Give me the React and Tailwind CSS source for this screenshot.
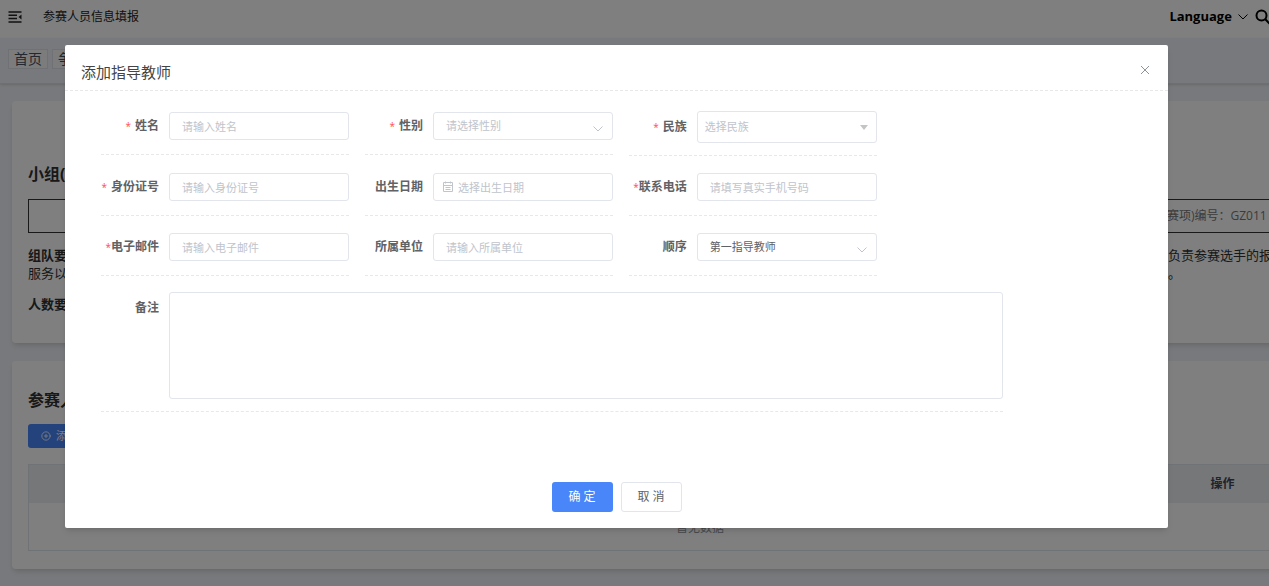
import { CirclePlus } from 'lucide-react'

const control =
  'w-full rounded-[3px] border border-[#e2e5ec] bg-white text-[11px] text-[#606266] outline-none placeholder:text-[#c0c4cc]'

function Chevron({ className }) {
  return (
    <svg viewBox="0 0 10 6" className={className} fill="none" stroke="currentColor">
      <path d="M0.5 0.5 5 5 9.5 0.5" />
    </svg>
  )
}

function Calendar() {
  return (
    <svg
      viewBox="0 0 12 12"
      className="pointer-events-none absolute top-2 left-[9px] h-3 w-3 text-[#c0c4cc]"
      fill="none"
      stroke="currentColor"
    >
      <path d="M1.5 1.5h9v9h-9zM1.5 4.5h9M3.5 0.5v2M8.5 0.5v2M3.5 6.5h5M3.5 8.5h5" />
    </svg>
  )
}

function Field({ id, label, required, tight, tall, children }) {
  return (
    <div
      className={`flex gap-[10px] border-b border-dashed border-[#e8e8e8] ${tall ? 'pb-3' : 'pb-[14px]'}`}
    >
      <label
        htmlFor={id}
        className={`w-[58px] shrink-0 text-right text-xs font-bold whitespace-nowrap text-[#606266] ${tall ? 'leading-8' : 'leading-7'}`}
      >
        {required && (
          <span className={`text-[10px] font-normal text-[#ff4d4f] ${tight ? '' : 'mr-1'}`}>*</span>
        )}
        {label}
      </label>
      <div className="relative min-w-0 flex-1">{children}</div>
    </div>
  )
}

function Page() {
  return (
    <div className="w-[110%]">
      <header className="flex h-[38px] items-center bg-white pr-[125px] pb-1 pl-2">
        <svg viewBox="0 0 14 12" className="h-3 w-[14px]" fill="none" stroke="#222" strokeWidth="1.5">
          <path d="M0.5 1h13M0.5 4.3h8.5M0.5 7.6h8.5M0.5 11h13" />
          <path d="M13.5 3.5v5l-3-2.5z" fill="#222" stroke="none" />
        </svg>
        <h1 className="ml-[21px] text-xs text-[#222]">参赛人员信息填报</h1>
        <button type="button" className="ml-auto flex items-center text-[13px] font-bold text-black">
          Language
          <Chevron className="ml-[6px] h-[6px] w-[10px]" />
        </button>
        <button type="button" aria-label="搜索" className="ml-[7px]">
          <svg viewBox="0 0 16 16" className="h-4 w-4" fill="none" stroke="#000" strokeWidth="2">
            <circle cx="6.5" cy="6.5" r="5" />
            <path d="m10.3 10.3 5 5" />
          </svg>
        </button>
      </header>

      <nav className="flex h-[46px] gap-1 border-b border-[#dcdfe6] pt-[11px] pl-2 text-sm text-[#495060] shadow-sm">
        <a href="#home" className="h-5 border border-[#dfe2e8] bg-[#f8f9fb] px-[5px] leading-[18px]">
          首页
        </a>
        <a href="#contest" className="h-5 border border-[#dfe2e8] bg-[#f8f9fb] px-[5px] leading-[18px]">
          争
        </a>
      </nav>

      <main className="space-y-[18px] px-3 pt-[17px] pb-[18px]">
        <section className="h-[242px] rounded bg-white px-4 pt-[61px] text-[13px] leading-[18px] text-[#303133] shadow-md">
          <h2 className="text-base leading-6 font-bold">小组(团体)信息</h2>
          <div className="mt-[13px] flex h-[34px] items-center border border-[#333] text-xs text-[#777]">
            <span className="flex-1" />
            <span className="w-[200px] shrink-0">赛项)编号：GZ011</span>
          </div>
          <div className="mt-[13px] flex">
            <b className="flex-1">组队要求：</b>
            <span className="w-[200px] shrink-0 whitespace-nowrap">负责参赛选手的报名</span>
          </div>
          <div className="flex">
            <span className="flex-1">服务以及日常管理</span>
            <span className="w-[200px] shrink-0">。</span>
          </div>
          <p className="mt-[13px] font-bold">人数要求：</p>
        </section>

        <section className="h-[208px] rounded bg-white px-4 pt-[27px] shadow-md">
          <h2 className="text-base leading-6 font-bold text-[#303133]">参赛人员</h2>
          <button
            type="button"
            className="mt-3 flex h-6 items-center gap-[5px] rounded-[3px] bg-[#4886f9] px-[13px] text-[11px] text-white"
          >
            <CirclePlus size={10} />
            添加参赛人员
          </button>
          <table className="mt-4 w-full table-fixed border border-[#dfe6ec] text-xs">
            <colgroup>
              <col />
              <col className="w-[110px]" />
              <col className="w-[90px]" />
            </colgroup>
            <thead>
              <tr className="h-[38px] bg-[#ebeef2] text-[#424656]">
                <th />
                <th>操作</th>
                <th />
              </tr>
            </thead>
            <tbody>
              <tr className="h-12">
                <td colSpan={3} className="pt-1 pl-1 text-center text-[#909399]">
                  暂无数据
                </td>
              </tr>
            </tbody>
          </table>
        </section>
      </main>
    </div>
  )
}

function TeacherDialog() {
  return (
    <div
      role="dialog"
      aria-label="添加指导教师"
      className="mt-[45px] mr-[101px] ml-[65px] rounded-[2px] bg-white pb-4 shadow-md"
    >
      <div className="flex h-[46px] items-center justify-between border-b border-dashed border-[#e8e8e8] pt-[9px] pr-[18px] pl-4">
        <h2 className="text-[15px] text-[#444]">添加指导教师</h2>
        <button type="button" aria-label="关闭" className="mb-1 text-[#909399]">
          <svg viewBox="0 0 10 10" className="h-[10px] w-[10px]" fill="none" stroke="currentColor">
            <path d="m1 1 8 8M9 1 1 9" />
          </svg>
        </button>
      </div>

      <form className="pt-5">
        <div className="mr-[165px] ml-9">
          <div className="grid w-[86%] grid-cols-3 items-center gap-x-4 gap-y-[17px]">
            <Field id="name" label="姓名" required>
              <input id="name" className={`${control} h-7 px-3`} placeholder="请输入姓名" />
            </Field>
            <Field id="gender" label="性别" required>
              <select
                id="gender"
                defaultValue=""
                className={`${control} h-7 appearance-none px-3 invalid:text-[#c0c4cc]`}
                required
              >
                <option value="">请选择性别</option>
                <option value="1">男</option>
                <option value="2">女</option>
              </select>
              <Chevron className="pointer-events-none absolute top-[14px] right-[10px] h-[6px] w-[10px] text-[#c0c4cc]" />
            </Field>
            <Field id="nation" label="民族" required tall>
              <select
                id="nation"
                defaultValue=""
                className={`${control} h-8 appearance-none px-[7px] invalid:text-[#c0c4cc]`}
                required
              >
                <option value="">选择民族</option>
                <option value="1">汉族</option>
              </select>
              <svg
                viewBox="0 0 8 5"
                className="pointer-events-none absolute top-[14px] right-[9px] h-[5px] w-2"
                fill="#c4c4c4"
              >
                <path d="M0 0h8L4 5z" />
              </svg>
            </Field>

            <Field id="idcard" label="身份证号" required>
              <input id="idcard" className={`${control} h-7 px-3`} placeholder="请输入身份证号" />
            </Field>
            <Field id="birthday" label="出生日期">
              <input id="birthday" className={`${control} h-7 pl-6`} placeholder="选择出生日期" />
              <Calendar />
            </Field>
            <Field id="phone" label="联系电话" required tight>
              <input id="phone" className={`${control} h-7 px-3`} placeholder="请填写真实手机号码" />
            </Field>

            <Field id="email" label="电子邮件" required tight>
              <input id="email" className={`${control} h-7 px-3`} placeholder="请输入电子邮件" />
            </Field>
            <Field id="company" label="所属单位">
              <input id="company" className={`${control} h-7 px-3`} placeholder="请输入所属单位" />
            </Field>
            <Field id="order" label="顺序">
              <select id="order" defaultValue="1" className={`${control} h-7 appearance-none px-3`}>
                <option value="1">第一指导教师</option>
                <option value="2">第二指导教师</option>
              </select>
              <Chevron className="pointer-events-none absolute top-[14px] right-[10px] h-[6px] w-[10px] text-[#c0c4cc]" />
            </Field>
          </div>

          <div className="mt-4">
            <Field id="remark" label="备注" tall>
              <textarea id="remark" className={`${control} block h-[107px] resize-none px-3 py-1`} />
            </Field>
          </div>
        </div>

        <div className="mt-[70px] flex justify-center gap-2 text-xs">
          <button type="button" className="h-[30px] w-[61px] rounded-[3px] bg-[#4886f9] text-white">
            确 定
          </button>
          <button
            type="button"
            className="h-[30px] w-[61px] rounded-[3px] border border-[#e2e5ec] bg-white text-[#606266]"
          >
            取 消
          </button>
        </div>
      </form>
    </div>
  )
}

export default function App() {
  return (
    <div className="relative min-h-screen overflow-hidden bg-[#f0f3f8] font-['Open_Sans','Noto_Sans_CJK_SC',sans-serif]">
      <Page />
      <div className="absolute inset-0 bg-black/50">
        <TeacherDialog />
      </div>
    </div>
  )
}
